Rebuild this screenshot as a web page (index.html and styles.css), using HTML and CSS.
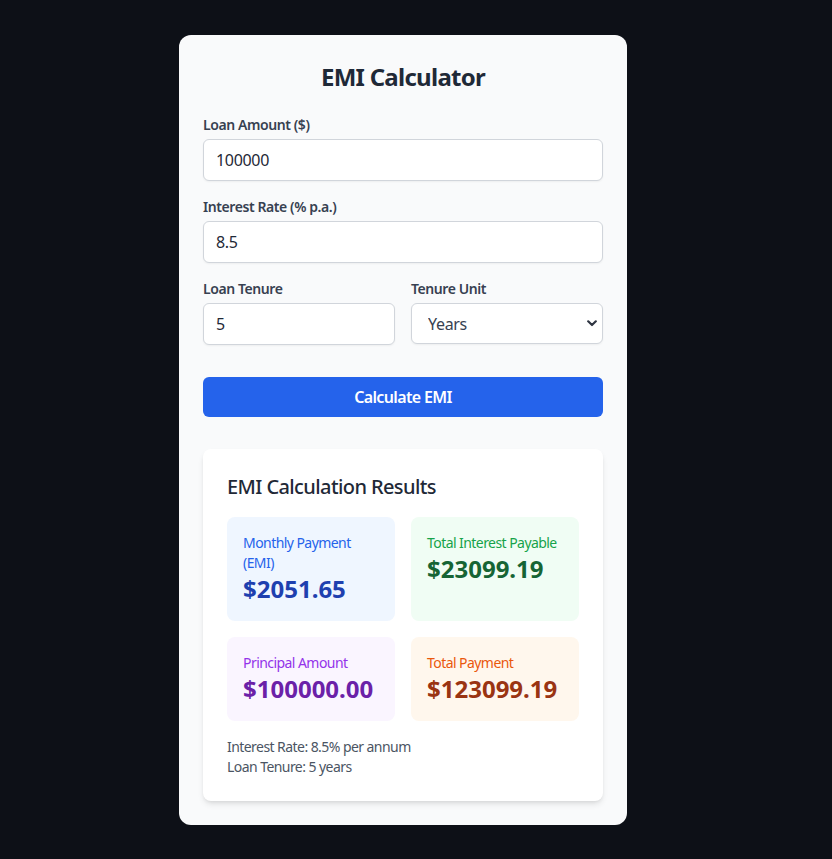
FILE: index.html
```html
<!DOCTYPE html>
<html lang="en">
<head>
<meta charset="utf-8">
<title>EMI Calculator</title>
<link rel="stylesheet" href="styles.css">
</head>
<body>
<main class="page">
  <div class="card">
    <h1 class="title">EMI Calculator</h1>
    <form class="form">
      <div class="field">
        <label class="label">Loan Amount ($)</label>
        <input class="input" type="text" value="100000">
      </div>
      <div class="field">
        <label class="label">Interest Rate (% p.a.)</label>
        <input class="input" type="text" value="8.5">
      </div>
      <div class="row">
        <div class="field">
          <label class="label">Loan Tenure</label>
          <input class="input" type="text" value="5">
        </div>
        <div class="field">
          <label class="label">Tenure Unit</label>
          <div class="select-wrap">
            <select class="select">
              <option>Years</option>
              <option>Months</option>
            </select>
            <svg class="chevron" width="10" height="7" viewBox="0 0 10 7"><path d="M1.2 1.3 L5 5 L8.8 1.3" fill="none" stroke="#2f3542" stroke-width="2.2" stroke-linecap="round" stroke-linejoin="round"/></svg>
          </div>
        </div>
      </div>
      <div class="actions">
        <button type="button" class="button">Calculate EMI</button>
      </div>
    </form>

    <section class="results">
      <h2 class="results-title">EMI Calculation Results</h2>
      <div class="grid">
        <div class="stat stat-blue">
          <div class="stat-label">Monthly Payment (EMI)</div>
          <div class="stat-value">$2051.65</div>
        </div>
        <div class="stat stat-green">
          <div class="stat-label">Total Interest Payable</div>
          <div class="stat-value">$23099.19</div>
        </div>
        <div class="stat stat-purple">
          <div class="stat-label">Principal Amount</div>
          <div class="stat-value">$100000.00</div>
        </div>
        <div class="stat stat-orange">
          <div class="stat-label">Total Payment</div>
          <div class="stat-value">$123099.19</div>
        </div>
      </div>
      <div class="notes">
        <p>Interest Rate: 8.5% per annum</p>
        <p>Loan Tenure: 5 years</p>
      </div>
    </section>
  </div>
</main>
</body>
</html>
```

FILE: styles.css
```css
* { box-sizing: border-box; }
html, body { margin: 0; padding: 0; }
body {
  background: #0d1017;
  font-family: "Noto Sans", "Open Sans", sans-serif;
  color: #1f2937;
  letter-spacing: -0.035em;
}
.page {
  min-height: 859px;
  display: flex;
  align-items: center;
  justify-content: center;
  padding-right: 26px;
}
.card {
  width: 448px;
  background: #f9fafb;
  border-radius: 12px;
  padding: 24px;
}
.title {
  margin: 0 0 24px;
  font-size: 24px;
  line-height: 32px;
  font-weight: 700;
  text-align: center;
  color: #1f2937;
  padding-top: 2px;
  height: 32px;
  letter-spacing: -0.03em;
}
.form { display: flex; flex-direction: column; gap: 16px; margin: 0; }
.field { display: flex; flex-direction: column; min-width: 0; }
.label {
  font-size: 14px;
  line-height: 20px;
  font-weight: 600;
  color: #374151;
  margin-bottom: 4px;
  letter-spacing: -0.03em;
}
.input, .select {
  width: 100%;
  height: 42px;
  border: 1px solid #d1d5db;
  border-radius: 6px;
  background: #fff;
  padding: 0 12px;
  font-family: inherit;
  font-size: 16px;
  color: #1f2937;
  outline: none;
  letter-spacing: -0.02em;
  box-shadow: 0 1px 2px rgba(0,0,0,0.05);
}
.row { display: grid; grid-template-columns: 1fr 1fr; gap: 16px; }
.select-wrap { position: relative; }
.select {
  appearance: none;
  -webkit-appearance: none;
  height: 41px;
  padding: 2px 12px 0 16px;
  color: #374151;
}
.chevron { position: absolute; right: 6px; top: 17px; pointer-events: none; }
.actions { padding-top: 16px; }
.button {
  width: 100%;
  height: 40px;
  border: none;
  border-radius: 6px;
  background: #2563eb;
  color: #fff;
  font-family: inherit;
  font-size: 16px;
  font-weight: 600;
  letter-spacing: -0.04em;
  cursor: pointer;
}
.results {
  margin-top: 32px;
  background: #fff;
  border-radius: 8px;
  padding: 24px;
  box-shadow: 0 4px 6px -1px rgba(0,0,0,0.1), 0 2px 4px -2px rgba(0,0,0,0.1);
}
.results-title {
  margin: 0 0 16px;
  font-size: 20px;
  line-height: 28px;
  font-weight: 500;
  color: #1f2937;
  letter-spacing: -0.03em;
}
.grid { display: grid; grid-template-columns: 1fr 1fr; gap: 16px; }
.stat { border-radius: 8px; padding: 16px; }
.stat-label { font-size: 14px; line-height: 20px; }
.stat-value { font-size: 24px; line-height: 32px; font-weight: 700; letter-spacing: 0; }
.stat-blue { background: #eff6ff; }
.stat-blue .stat-label { color: #2563eb; }
.stat-blue .stat-value { color: #1e40af; }
.stat-green { background: #f0fdf4; }
.stat-green .stat-label { color: #16a34a; }
.stat-green .stat-value { color: #166534; }
.stat-purple { background: #faf5ff; }
.stat-purple .stat-label { color: #9333ea; }
.stat-purple .stat-value { color: #6b21a8; }
.stat-orange { background: #fff7ed; }
.stat-orange .stat-label { color: #ea580c; }
.stat-orange .stat-value { color: #9a3412; }
.notes { margin-top: 16px; font-size: 14px; line-height: 20px; color: #4b5563; }
.notes p { margin: 0; }
```
